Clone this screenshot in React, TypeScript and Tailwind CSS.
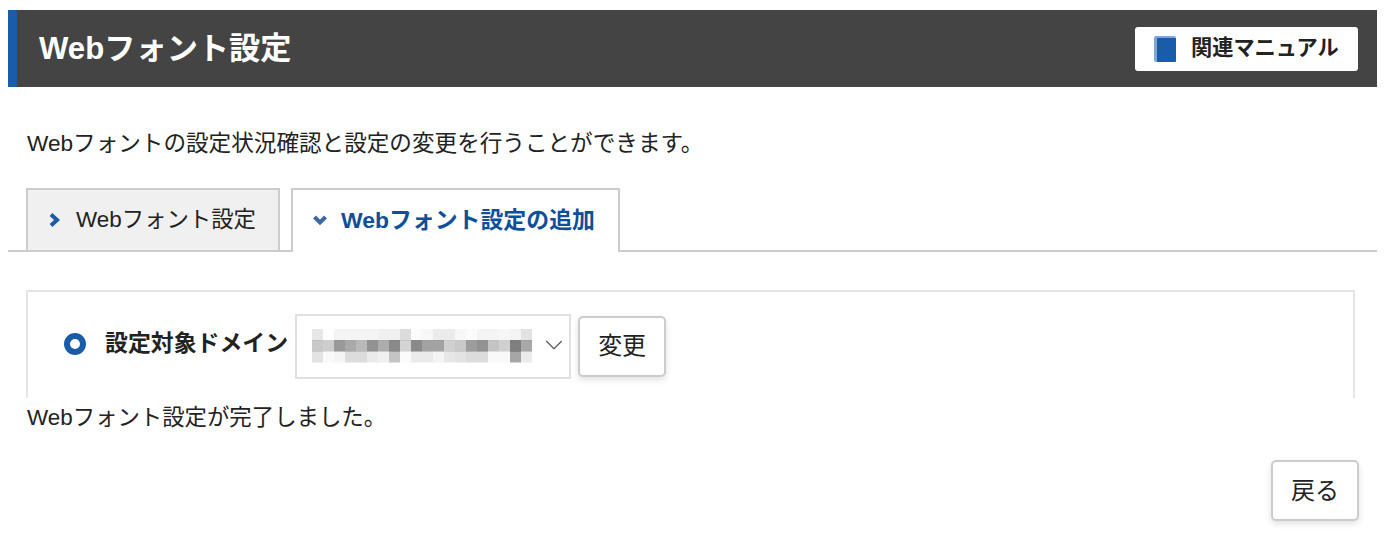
import { ChevronDown } from "lucide-react";

// pixelated domain name: rows of grey levels (0 = white)
const mosaic = [
  [12, 0, 6, 6, 6, 6, 8, 8, 18, 2, 4, 10, 10, 4, 2, 6, 6, 4, 6, 14, 8],
  [28, 26, 52, 44, 36, 56, 42, 60, 22, 60, 48, 48, 24, 28, 50, 56, 30, 24, 66, 44],
  [14, 3, 6, 18, 18, 10, 8, 30, 2, 10, 10, 6, 12, 14, 18, 18, 3, 3, 46, 10],
];

function Mosaic() {
  return (
    <svg width="220" height="34" viewBox="0 0 220 34" className="block" style={{ filter: "blur(0.6px)" }}>
      {mosaic.map((row, y) =>
        row.slice(0, 20).map((v, x) => (
          <rect key={`${y}-${x}`} x={x * 11} y={y * 11} width="11" height="11.5" fill={`rgba(60,60,60,${v / 100})`} />
        ))
      )}
    </svg>
  );
}

function Caret({ open }: { open?: boolean }) {
  return (
    <svg width="14" height="14" viewBox="0 0 14 14" className="shrink-0">
      <path
        d={open ? "M1.5 4 L7 9.5 L12.5 4" : "M3 1.5 L9 7 L3 12.5"}
        fill="none"
        stroke={open ? "#3d68a5" : "#1a5ca8"}
        strokeWidth="4"
      />
    </svg>
  );
}

export default function App() {
  return (
    <div className="h-[551px] w-[1388px] overflow-hidden bg-white pt-[10px] pl-2 pr-[11px] font-['Liberation_Sans','Noto_Sans_CJK_JP',sans-serif] text-[22.4px] leading-none text-[#222]">
      {/* Title bar */}
      <div className="flex h-[77px] items-center justify-between border-l-[9px] border-[#1a5ca8] bg-[#444] pl-[22px] pr-[19px]">
        <h1 className="text-[31.2px] font-bold text-white">Webフォント設定</h1>
        <button className="flex h-[44px] w-[223px] items-center gap-[15px] rounded-[3px] bg-white pb-[1px] pl-[19px] text-[21.2px] font-bold text-[#222]">
          <svg width="22" height="26" viewBox="0 0 22 26" className="mt-[1px] shrink-0">
            <rect x="0" y="0" width="22" height="26" rx="2" fill="#7fa6d6" />
            <rect x="3" y="2" width="19" height="24" rx="1" fill="#1a5ca8" />
          </svg>
          関連マニュアル
        </button>
      </div>

      <p className="mt-[45px] ml-[19px] text-[22.6px] leading-[24px]">Webフォントの設定状況確認と設定の変更を行うことができます。</p>

      {/* Tabs */}
      <div className="mt-[32px] flex h-[64px] gap-[11px] border-b-2 border-[#ccc] pl-[18px]">
        <div className="flex h-[64px] w-[254px] items-center gap-[14px] border-2 border-[#ccc] bg-[#f0f0f0] pl-[20px]">
          <Caret />
          Webフォント設定
        </div>
        <div className="flex h-[64px] w-[329px] items-center gap-[14px] border-2 border-b-0 border-[#ccc] bg-white pb-[2px] pl-[20px] text-[22.9px] font-bold text-[#0f4f9a]">
          <Caret open />
          Webフォント設定の追加
        </div>
      </div>

      {/* Domain panel */}
      <div className="mt-[38px] ml-[18px] mr-[22px] flex h-[108px] items-center gap-[7px] border-x-2 border-t-2 border-[#e5e5e5] pt-[2px] pl-[36px]">
        <span className="mb-[5px] mr-[2px] h-[22px] w-[22px] shrink-0 rounded-full border-[6px] border-[#1a5ca8] bg-white" />
        <span className="mb-[5px] ml-[10px] text-[22.9px] font-bold">設定対象ドメイン</span>
        <div className="relative flex h-[65px] w-[276px] items-center border-2 border-[#e0e0e0] bg-white pl-[15px]">
          <Mosaic />
          <ChevronDown className="absolute right-0 top-[14px] h-[30px] w-[30px] text-[#555]" strokeWidth={0.9} />
        </div>
        <button className="h-[61px] w-[88px] rounded-[5px] border-2 border-[#ccc] bg-white text-[24px] text-[#222] shadow-[0_3px_6px_rgba(0,0,0,0.12)]">
          変更
        </button>
      </div>

      <p className="ml-[19px] mt-[8px] leading-[24px]">Webフォント設定が完了しました。</p>

      <div className="mt-[30px] flex justify-end">
        <button className="mr-[18px] h-[61px] w-[88px] rounded-[5px] border-2 border-[#ccc] bg-white text-[24px] text-[#222] shadow-[0_3px_6px_rgba(0,0,0,0.12)]">
          戻る
        </button>
      </div>
    </div>
  );
}
